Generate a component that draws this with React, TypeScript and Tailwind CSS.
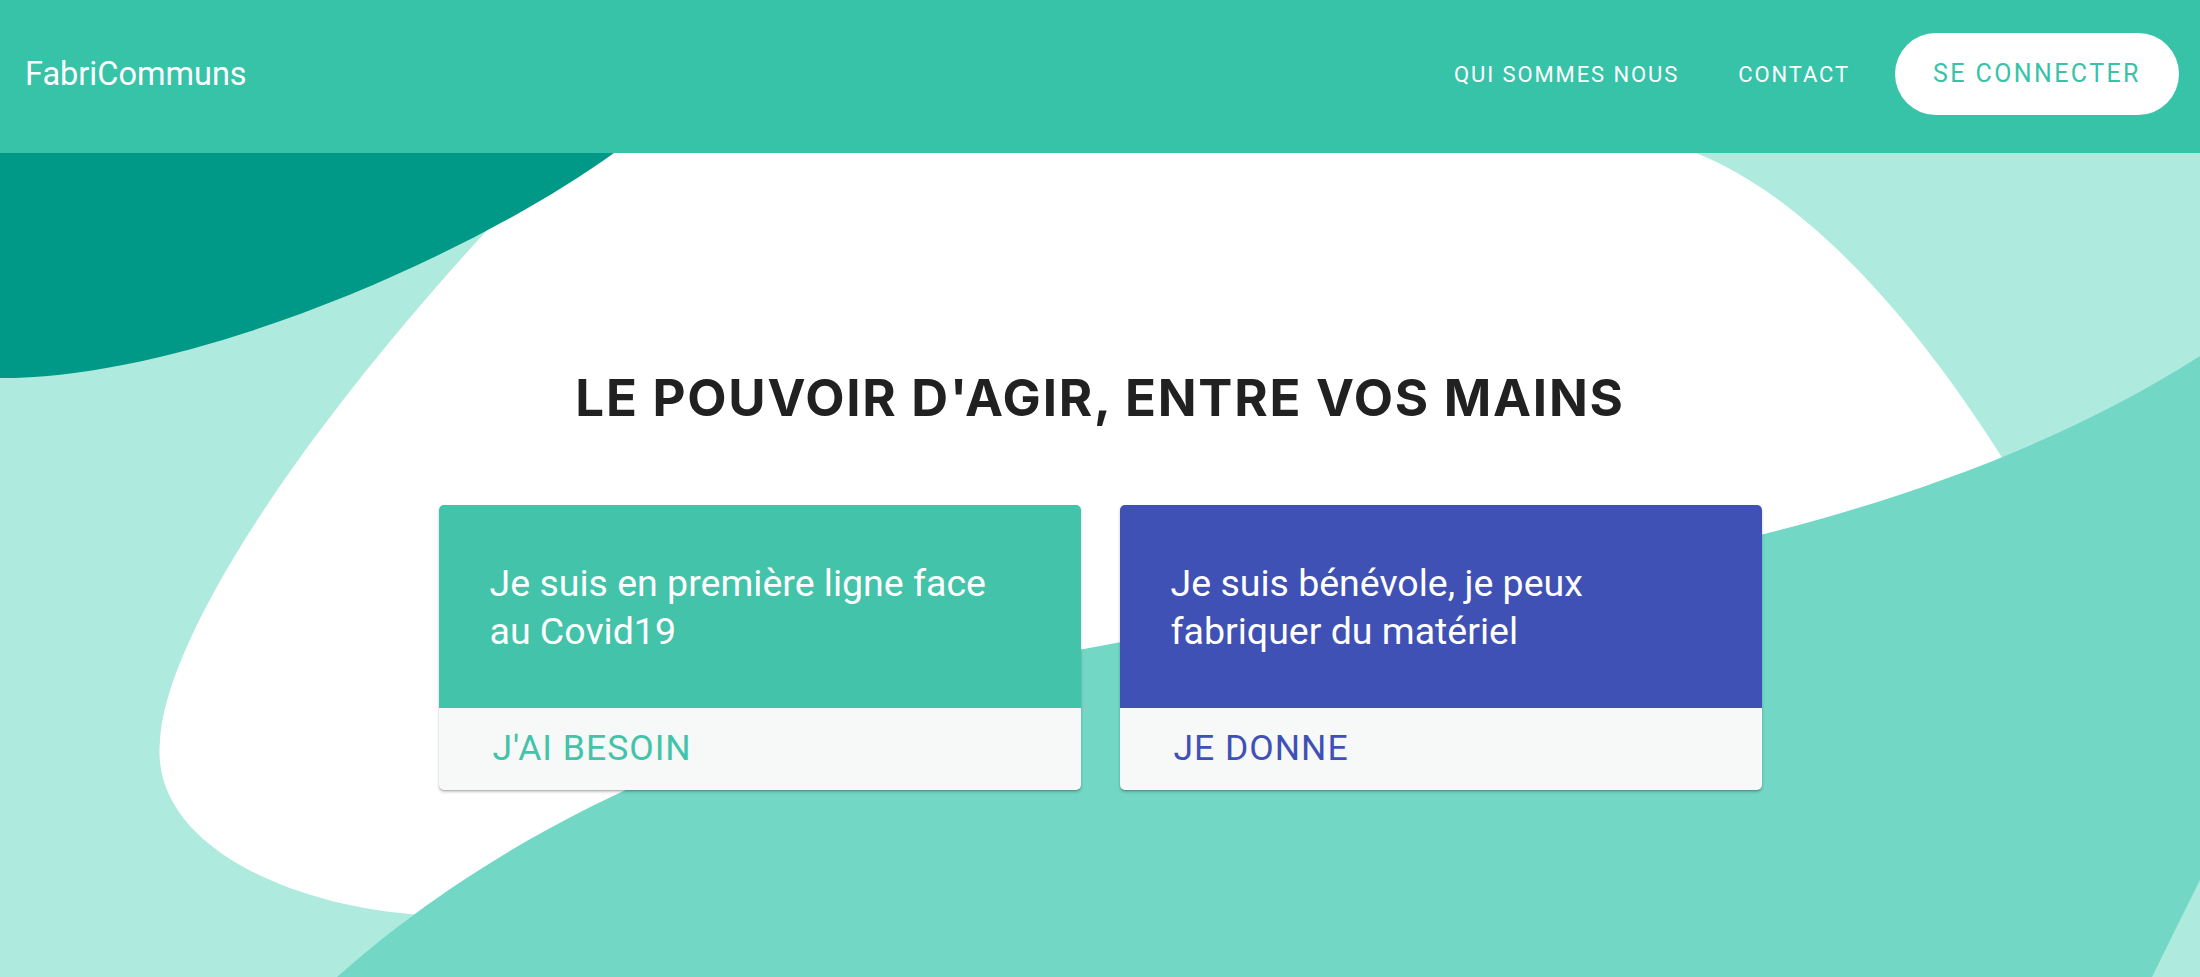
import React from "react";

function Background() {
  return (
    <svg
      className="absolute inset-0 w-[2200px] h-[977px]"
      viewBox="0 0 2200 977"
      preserveAspectRatio="none"
      aria-hidden="true"
    >
      <rect x="0" y="0" width="2200" height="977" fill="#afeadf" />
      <path
        d="M 560 153 L 1696 153 C 1785 188 1895 285 2010 470 L 1900 900 L 600 960 L 421 915 C 280 905 150 840 160 741 C 165 640 300 420 560 153 Z"
        fill="#ffffff"
      />
      <path
        d="M 337 977 C 480 850 700 720 1100 646 C 1350 600 1850 580 2200 356 L 2200 880 Q 2175 930 2152 977 Z"
        fill="#72d7c5"
      />
      <path d="M 0 153 L 614 153 C 480 250 200 378 0 378 Z" fill="#009886" />
    </svg>
  );
}

function Card({
  color,
  text,
  action,
}: {
  color: string;
  text: string;
  action: string;
}) {
  const isTeal = color === "teal";
  return (
    <div className="w-[642px] rounded-[5px] overflow-hidden bg-[#f7f8f8] shadow-[0_2px_3px_rgba(0,0,0,0.22),0_1px_1px_rgba(0,0,0,0.12)]">
      <div
        className={
          "h-[203px] flex items-center px-[51px] " +
          (isTeal ? "bg-[#43c3a9]" : "bg-[#3f51b5]")
        }
      >
        <p className="max-w-[520px] text-white text-[37.5px] leading-[48px] font-['Roboto',sans-serif]">
          {text}
        </p>
      </div>
      <div className="h-[82px] flex items-center px-[54px]">
        <span
          className={
            "text-[35.5px] uppercase tracking-[1px] font-['Roboto',sans-serif] " +
            (isTeal ? "text-[#43c3a9]" : "text-[#3f51b5]")
          }
        >
          {action}
        </span>
      </div>
    </div>
  );
}

export default function App() {
  return (
    <div className="relative w-[2200px] h-[977px] overflow-hidden font-['Roboto',sans-serif]">
      <Background />
      <div className="relative flex flex-col h-full">
        <header className="h-[153px] shrink-0 bg-[#36c3a8] flex items-center pl-[25px] pr-[21px] pb-[5px]">
          <div className="text-white text-[32.5px] font-['Roboto',sans-serif] leading-none">
            FabriCommuns
          </div>
          <nav className="ml-auto flex items-center">
            <a className="text-white text-[22px] tracking-[1.9px] uppercase">
              Qui sommes nous
            </a>
            <a className="ml-[59px] text-white text-[22px] tracking-[1.9px] uppercase">
              Contact
            </a>
            <button className="ml-[45px] w-[284px] h-[82px] rounded-full bg-white text-[#36c3a8] text-[25px] tracking-[2.4px] uppercase flex items-center justify-center">
              Se connecter
            </button>
          </nav>
        </header>
        <main className="flex flex-col items-center pt-[215px]">
          <h1 className="text-[#212121] text-[51px] leading-[60px] font-bold font-['Inter',sans-serif] tracking-[1.75px]">
            LE POUVOIR D'AGIR, ENTRE VOS MAINS
          </h1>
          <div className="mt-[77px] flex gap-[39px]">
            <Card
              color="teal"
              text="Je suis en première ligne face au Covid19"
              action="J'ai besoin"
            />
            <Card
              color="indigo"
              text="Je suis bénévole, je peux fabriquer du matériel"
              action="Je donne"
            />
          </div>
        </main>
      </div>
    </div>
  );
}
